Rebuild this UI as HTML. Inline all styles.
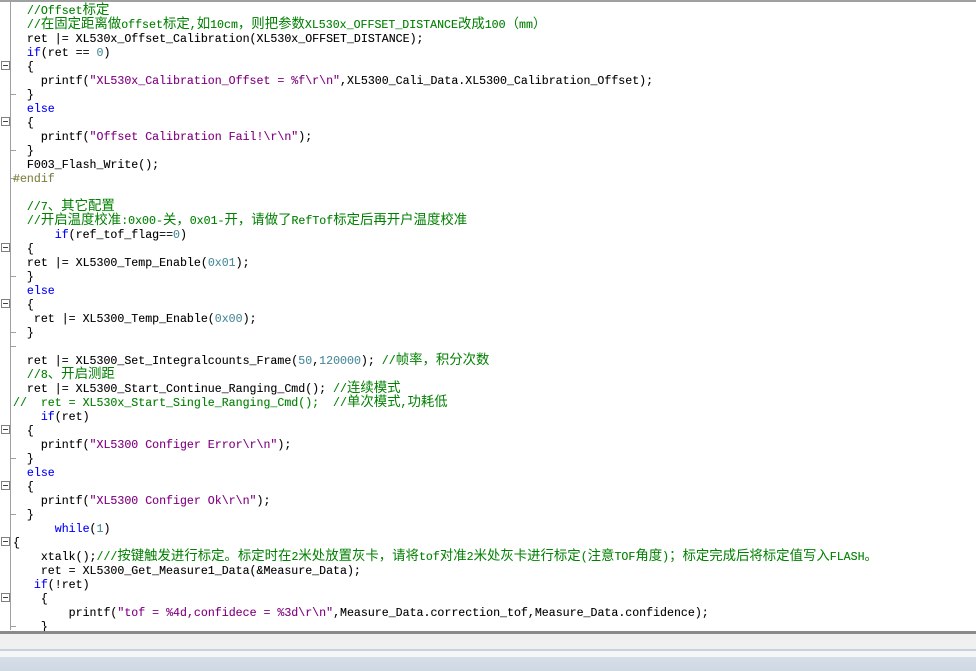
<!DOCTYPE html>
<html><head><meta charset="utf-8"><style>
html,body{margin:0;padding:0;background:#fff;width:976px;height:671px;overflow:hidden;position:relative}
#topb{position:absolute;left:0;top:0;width:976px;height:2px;background:#a0a0a0}
#gut{position:absolute;left:10px;top:2px;width:1px;height:628px;background:#a0a0a0}
pre{position:absolute;left:13px;top:5px;margin:0;font-family:"Liberation Mono",monospace;font-size:11.6px;line-height:14px;color:#000;white-space:pre;-webkit-text-stroke:0.1px currentColor}
.k{color:#0000ff}.c{color:#008000}.s{color:#800080}.n{color:#4a8a9a}
.z{font-family:"Noto Sans CJK SC",sans-serif;font-size:13.4px;line-height:0;-webkit-text-stroke:0}
.fb{position:absolute;left:1px;width:7px;height:7px;border:1px solid #808080;background:#fff}
.fb:after{content:"";position:absolute;left:1px;top:3px;width:5px;height:1px;background:#404040}
.tk{position:absolute;left:10px;width:6px;height:1px;background:#a0a0a0}
#b1{position:absolute;left:0;top:631px;width:976px;height:3px;background:#8a8a8a}
#b2{position:absolute;left:0;top:634px;width:976px;height:15px;background:#f0f0f0}
#b3{position:absolute;left:0;top:649px;width:976px;height:2px;background:#c8d0dc}
#b4{position:absolute;left:0;top:651px;width:976px;height:6px;background:#f4f6f8}
#b5{position:absolute;left:0;top:657px;width:976px;height:14px;background:linear-gradient(#d6dee8,#cfd8e3)}
</style></head><body>
<div id="topb"></div><div id="gut"></div>
<div class="fb" style="top:61px"></div><div class="fb" style="top:117px"></div>
<div class="fb" style="top:243px"></div><div class="fb" style="top:299px"></div>
<div class="fb" style="top:425px"></div><div class="fb" style="top:481px"></div>
<div class="fb" style="top:537px"></div><div class="fb" style="top:593px"></div>
<div class="tk" style="top:94px"></div><div class="tk" style="top:150px"></div><div class="tk" style="top:178px"></div>
<div class="tk" style="top:276px"></div><div class="tk" style="top:332px"></div><div class="tk" style="top:346px"></div>
<div class="tk" style="top:458px"></div><div class="tk" style="top:514px"></div><div class="tk" style="top:626px"></div>
<pre>  <span class="c">//Offset<span class="z">标定</span></span>
  <span class="c">//<span class="z">在固定距离做</span>offset<span class="z">标定</span>,<span class="z">如</span>10cm<span class="z">，则把参数</span>XL530x_OFFSET_DISTANCE<span class="z">改成</span>100<span class="z">（</span>mm<span class="z">）</span></span>
  ret |= XL530x_Offset_Calibration(XL530x_OFFSET_DISTANCE);
  <span class="k">if</span>(ret == <span class="n">0</span>)
  {
    printf(<span class="s">"XL530x_Calibration_Offset = %f\r\n"</span>,XL5300_Cali_Data.XL5300_Calibration_Offset);
  }
  <span class="k">else</span>
  {
    printf(<span class="s">"Offset Calibration Fail!\r\n"</span>);
  }
  F003_Flash_Write();
<span style="color:#808040">#endif</span>

  <span class="c">//7<span class="z">、其它配置</span></span>
  <span class="c">//<span class="z">开启温度校准</span>:0x00-<span class="z">关，</span>0x01-<span class="z">开，请做了</span>RefTof<span class="z">标定后再开户温度校准</span></span>
      <span class="k">if</span>(ref_tof_flag==<span class="n">0</span>)
  {
  ret |= XL5300_Temp_Enable(<span class="n">0x01</span>);
  }
  <span class="k">else</span>
  {
   ret |= XL5300_Temp_Enable(<span class="n">0x00</span>);
  }

  ret |= XL5300_Set_Integralcounts_Frame(<span class="n">50</span>,<span class="n">120000</span>); <span class="c">//<span class="z">帧率，积分次数</span></span>
  <span class="c">//8<span class="z">、开启测距</span></span>
  ret |= XL5300_Start_Continue_Ranging_Cmd(); <span class="c">//<span class="z">连续模式</span></span>
<span class="c">//  ret = XL530x_Start_Single_Ranging_Cmd();  //<span class="z">单次模式</span>,<span class="z">功耗低</span></span>
    <span class="k">if</span>(ret)
  {
    printf(<span class="s">"XL5300 Configer Error\r\n"</span>);
  }
  <span class="k">else</span>
  {
    printf(<span class="s">"XL5300 Configer Ok\r\n"</span>);
  }
      <span class="k">while</span>(<span class="n">1</span>)
{
    xtalk();<span class="c">///<span class="z">按键触发进行标定。标定时在</span>2<span class="z">米处放置灰卡，请将</span>tof<span class="z">对准</span>2<span class="z">米处灰卡进行标定</span>(<span class="z">注意</span>TOF<span class="z">角度</span>)<span class="z">；标定完成后将标定值写入</span>FLASH<span class="z">。</span></span>
    ret = XL5300_Get_Measure1_Data(&amp;Measure_Data);
   <span class="k">if</span>(!ret)
    {
        printf(<span class="s">"tof = %4d,confidece = %3d\r\n"</span>,Measure_Data.correction_tof,Measure_Data.confidence);
    }</pre>
<div id="b1"></div><div id="b2"></div><div id="b3"></div><div id="b4"></div><div id="b5"></div>
</body></html>
